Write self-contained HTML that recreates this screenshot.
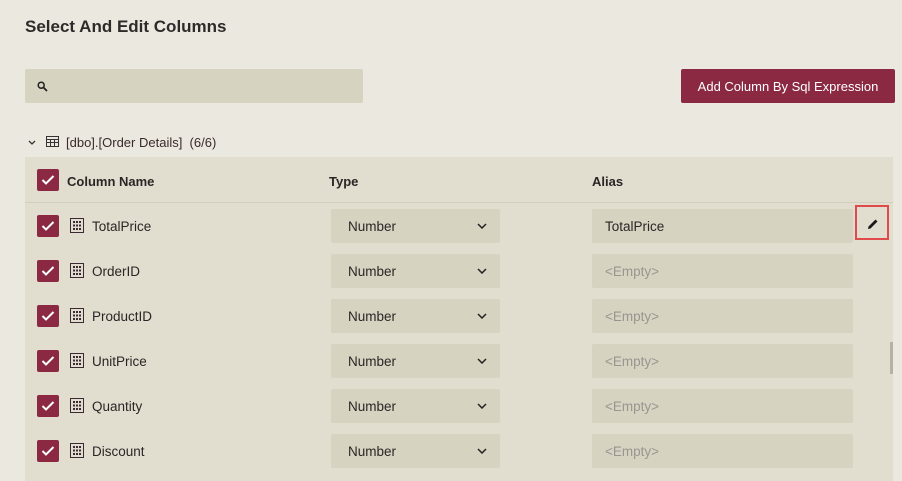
<!DOCTYPE html>
<html><head><style>
body{margin:0;width:902px;height:481px;overflow:hidden;background:#ebe8e0;font-family:"Liberation Sans",sans-serif;color:#2b2525;position:relative}
.a{position:absolute}
.cb{position:absolute;left:37px;width:22px;height:22px;background:#8b2942;border-radius:2px}
.cb svg{position:absolute;left:4px;top:5px}
.sel{position:absolute;left:331px;width:169px;height:34px;background:#d6d3c1;border-radius:2px;font-size:13.5px;line-height:35px}
.sel span{position:absolute;left:17px}
.sel svg{position:absolute;right:13px;top:14px}
.al{position:absolute;left:592px;width:261px;height:34px;background:#d6d3c1;border-radius:2px;font-size:13.5px;line-height:35px;padding-left:13px;box-sizing:border-box}
.nm{position:absolute;left:92px;font-size:13.5px}
</style></head><body>
<div class="a" style="left:25px;top:17px;font-size:17px;font-weight:bold;color:#2f2a2a">Select And Edit Columns</div>
<div class="a" style="left:25px;top:69px;width:338px;height:34px;background:#d6d3c1;border-radius:2px">
<svg class="a" style="left:12px;top:12px" width="11" height="11" viewBox="0 0 11 11"><circle cx="4.2" cy="4.2" r="3" fill="none" stroke="#222" stroke-width="1.5"/><path d="M6.5 6.5L10 10" stroke="#222" stroke-width="1.8"/></svg></div>
<div class="a" style="left:681px;top:69px;width:214px;height:34px;background:#8b2942;border-radius:2px;color:#fff;font-size:13px;line-height:35px;text-align:center">Add Column By Sql Expression</div>
<svg class="a" style="left:28px;top:140px" width="8" height="6" viewBox="0 0 8 6"><path d="M1 1L4 4L7 1" fill="none" stroke="#333" stroke-width="1.3"/></svg>
<svg class="a" style="left:46px;top:136px" width="13" height="11" viewBox="0 0 13 11"><rect x="0.5" y="0.5" width="12" height="10" fill="none" stroke="#333"/><path d="M0 3.5H13M0 6.5H13M4.5 3V11M8.5 3V11" stroke="#333"/></svg>
<div class="a" style="left:66px;top:135px;font-size:13px;color:#3a2a2a">[dbo].[Order Details]&nbsp; (6/6)</div>
<div class="a" style="left:25px;top:157px;width:868px;height:324px;background:#e1ded0"></div>
<div class="a" style="left:25px;top:202px;width:868px;height:1px;background:#d2cfbf"></div>
<div class="a" style="left:890px;top:342px;width:3px;height:32px;background:#b5b2a5"></div>
<div class="cb" style="top:169px"><svg width="14" height="12" viewBox="0 0 14 12"><path d="M1.5 6L5 9.5L12.5 2" fill="none" stroke="#fff" stroke-width="2"/></svg></div>
<div class="a" style="left:67px;top:174px;font-size:13px;font-weight:bold">Column Name</div>
<div class="a" style="left:329px;top:174px;font-size:13px;font-weight:bold">Type</div>
<div class="a" style="left:592px;top:174px;font-size:13px;font-weight:bold">Alias</div>
<div class="a" style="left:855px;top:205px;width:34px;height:35px;border:2px solid #e04a4a;box-sizing:border-box">
<svg class="a" style="left:10px;top:11px" width="12" height="12" viewBox="0 0 12 12"><path d="M1 11L1.5 8.5L8.5 1.5L10.5 3.5L3.5 10.5Z" fill="#1a1a1a"/></svg></div>
<div id="rows"></div>
<script>
var n=["TotalPrice","OrderID","ProductID","UnitPrice","Quantity","Discount"],h="";
n.forEach(function(t,i){var c=226+45*i;
h+='<div class="cb" style="top:'+(c-11)+'px"><svg width="14" height="12" viewBox="0 0 14 12"><path d="M1.5 6L5 9.5L12.5 2" fill="none" stroke="#fff" stroke-width="2"/></svg></div>';
h+='<svg class="a" style="left:70px;top:'+(c-8)+'px" width="14" height="15" viewBox="0 0 14 15"><rect x="0.5" y="0.5" width="13" height="14" fill="none" stroke="#3b2a33"/><g fill="#3b2a33"><rect x="3" y="3" width="2" height="2"/><rect x="6" y="3" width="2" height="2"/><rect x="9" y="3" width="2" height="2"/><rect x="3" y="6.5" width="2" height="2"/><rect x="6" y="6.5" width="2" height="2"/><rect x="9" y="6.5" width="2" height="2"/><rect x="3" y="10" width="2" height="2"/><rect x="6" y="10" width="2" height="2"/><rect x="9" y="10" width="2" height="2"/></g></svg>';
h+='<div class="nm" style="top:'+(c-7)+'px">'+t+'</div>';
h+='<div class="sel" style="top:'+(c-17)+'px"><span>Number</span><svg width="10" height="6" viewBox="0 0 10 6"><path d="M1 1L5 5L9 1" fill="none" stroke="#222" stroke-width="1.5"/></svg></div>';
h+='<div class="al" style="top:'+(c-17)+'px;'+(i?'color:#9a9590':'')+'">'+(i?'&lt;Empty&gt;':t)+'</div>';});
document.getElementById('rows').innerHTML=h;
</script>
</body></html>
